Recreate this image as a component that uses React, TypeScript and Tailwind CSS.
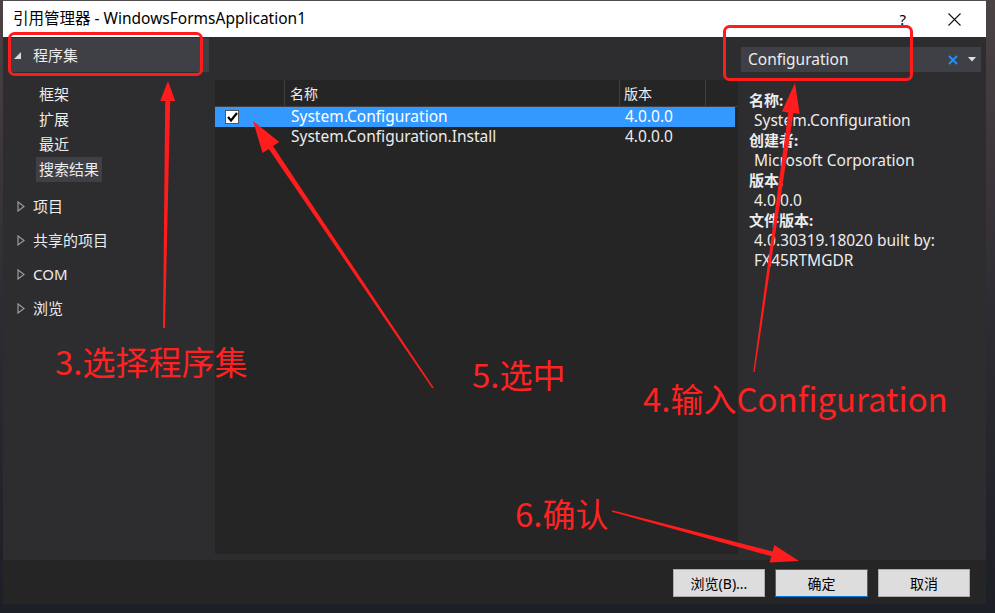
import React from 'react'

// reference manager dialog with red tutorial annotations on top

const sub = ['框架', '扩展', '最近', '搜索结果']
const groups = ['项目', '共享的项目', 'COM', '浏览']

const details = [
  { label: '名称:', value: 'System.Configuration' },
  { label: '创建者:', value: 'Microsoft Corporation' },
  { label: '版本:', value: '4.0.0.0' },
  { label: '文件版本:', value: '4.0.30319.18020 built by:\nFX45RTMGDR' },
]

// tapered arrow: thin tail, wider shaft near the head, triangular head
const arrow = (tx: number, ty: number, hx: number, hy: number, w0: number, w1: number, head: number, len: number) => {
  const dx = hx - tx
  const dy = hy - ty
  const l = Math.hypot(dx, dy)
  const ux = dx / l
  const uy = dy / l
  const nx = -uy
  const ny = ux
  const bx = hx - ux * len
  const by = hy - uy * len
  const p = (x: number, y: number) => `${x.toFixed(1)},${y.toFixed(1)}`
  return [
    p(tx + (nx * w0) / 2, ty + (ny * w0) / 2),
    p(bx + (nx * w1) / 2, by + (ny * w1) / 2),
    p(bx + (nx * head) / 2, by + (ny * head) / 2),
    p(hx, hy),
    p(bx - (nx * head) / 2, by - (ny * head) / 2),
    p(bx - (nx * w1) / 2, by - (ny * w1) / 2),
    p(tx - (nx * w0) / 2, ty - (ny * w0) / 2),
  ].join(' ')
}

const CollapsedTri = () => (
  <svg width="8" height="11" viewBox="0 0 8 11" className="shrink-0">
    <path d="M1 1 L7 5.5 L1 10 Z" fill="none" stroke="#9a9a9a" strokeWidth="1.2" />
  </svg>
)

export default function App() {
  return (
    <div className="relative w-[995px] h-[613px] overflow-hidden bg-gradient-to-b from-[#4b4244] via-[#2e2c33] to-[#1d1f26] font-['Segoe_UI','Noto_Sans','Noto_Sans_CJK_SC',sans-serif]">
      <div className="ml-[3px] w-[983px] h-[604px] flex flex-col">
        {/* title bar */}
        <div className="h-[37px] shrink-0 bg-white border-t border-[#505050] flex items-center pl-[10px] text-[15.5px] text-black">
          <span>引用管理器 - WindowsFormsApplication1</span>
          <span className="ml-auto mr-[42px] text-[15px]">?</span>
          <svg width="13" height="13" viewBox="0 0 13 13" className="mr-[25px]">
            <path d="M0.5 0.5 L12.5 12.5 M12.5 0.5 L0.5 12.5" stroke="#111" strokeWidth="1.1" />
          </svg>
        </div>

        <div className="flex-1 flex flex-col bg-[#2d2d30] text-[15px] text-[#ececec]">
          <div className="h-[517px] flex">
            {/* left nav */}
            <div className="w-[212px] bg-[#2d2d30]">
              <div className="mt-[1px] ml-[5px] mr-[6px] h-[34px] bg-[#3f3f46] flex items-center pl-[6px]">
                <svg width="7" height="7" viewBox="0 0 7 7">
                  <path d="M7 0 L7 7 L0 7 Z" fill="#d8d8d8" />
                </svg>
                <span className="ml-[12px]">程序集</span>
              </div>
              <div className="mt-[10px] pl-[33px]">
                {sub.map((s, i) => (
                  <div key={s} className="h-[25px] flex items-center">
                    <span className={`px-[3px] h-[25px] flex items-center ${i === 3 ? 'bg-[#3f3f46]' : ''}`}>{s}</span>
                  </div>
                ))}
              </div>
              <div className="mt-[7px]">
                {groups.map((g) => (
                  <div key={g} className="h-[34px] flex items-center pl-[14px]">
                    <CollapsedTri />
                    <span className="ml-[8px]">{g}</span>
                  </div>
                ))}
              </div>
            </div>

            {/* list */}
            <div className="w-[523px] flex flex-col">
              <div className="h-[43px] bg-[#2d2d30]" />
              <div className="flex-1 bg-[#252526]">
                <div className="h-[27px] flex border-b border-[#3f3f46] text-[14px]">
                  <div className="w-[70px] border-r border-[#3f3f46]" />
                  <div className="w-[335px] border-r border-[#3f3f46] pl-[5px] flex items-center">名称</div>
                  <div className="w-[86px] border-r border-[#3f3f46] pl-[4px] flex items-center">版本</div>
                </div>
                <div className="h-[20px] flex items-center bg-[#3399ff] text-white text-[15.5px] mr-[3px]">
                  <div className="w-[70px] pl-[10px] flex items-center">
                    <div className="w-[14px] h-[14px] bg-white border border-[#555] flex items-center justify-center">
                      <svg width="11" height="10" viewBox="0 0 11 10">
                        <path d="M1 5 L4 8.5 L10 1" fill="none" stroke="#000" strokeWidth="2.2" />
                      </svg>
                    </div>
                  </div>
                  <div className="w-[335px] pl-[6px]">System.Configuration</div>
                  <div className="pl-[5px]">4.0.0.0</div>
                </div>
                <div className="h-[20px] flex items-center text-[15.5px]">
                  <div className="w-[70px]" />
                  <div className="w-[335px] pl-[6px]">System.Configuration.Install</div>
                  <div className="pl-[5px]">4.0.0.0</div>
                </div>
              </div>
            </div>

            {/* right details */}
            <div className="flex-1 bg-[#2d2d30]">
              <div className="mt-[10px] ml-[3px] mr-[5px] h-[25px] bg-[#3f3f46] flex items-center pl-[7px] text-[15.5px]">
                <span>Configuration</span>
                <svg width="10" height="10" viewBox="0 0 10 10" className="ml-auto">
                  <path d="M1 1 L9 9 M9 1 L1 9" stroke="#1e8fff" strokeWidth="2" />
                </svg>
                <svg width="8" height="5" viewBox="0 0 8 5" className="ml-[10px] mr-[5px]">
                  <path d="M0 0 L8 0 L4 4.5 Z" fill="#e0e0e0" />
                </svg>
              </div>
              <div className="mt-[18px] pl-[11px] leading-[20px]">
                {details.map((d) => (
                  <div key={d.label}>
                    <div className="font-bold">{d.label}</div>
                    {d.value.split('\n').map((v) => (
                      <div key={v} className="pl-[5px] text-[15.5px]">{v}</div>
                    ))}
                  </div>
                ))}
              </div>
            </div>
          </div>

          <div className="h-[6px] bg-[#2d2d30]" />
          <div className="flex-1 bg-[#252526] flex justify-end items-start pt-[9px] pr-[16px] gap-[10px] text-[14px] text-black">
            <button className="w-[92px] h-[28px] bg-[#dddddd] border border-[#adadad]">浏览(B)...</button>
            <button className="w-[93px] h-[28px] bg-[#dddddd] border border-[#0078d7]">确定</button>
            <button className="w-[92px] h-[28px] bg-[#dddddd] border border-[#adadad]">取消</button>
          </div>
        </div>
      </div>

      {/* annotations */}
      <svg className="absolute inset-0 pointer-events-none" width="995" height="613">
        <rect x="9.5" y="33.5" width="192" height="41" rx="5" fill="none" stroke="#ff1c1c" strokeWidth="3" />
        <rect x="724.5" y="26.5" width="187" height="53" rx="5" fill="none" stroke="#ff1c1c" strokeWidth="3" />
        <polygon points={arrow(164, 328, 168, 81, 2, 5, 15, 20)} fill="#ff1c1c" />
        <polygon points={arrow(433, 388, 253, 121, 1.5, 5, 20, 32)} fill="#ff1c1c" />
        <polygon points={arrow(754, 372, 795, 83, 1.5, 5, 18, 30)} fill="#ff1c1c" />
        <polygon points={arrow(612, 511, 799, 561, 1.5, 5, 18, 28)} fill="#ff1c1c" />
      </svg>
      <div className="absolute left-[55px] top-[345px] text-[33px] leading-none text-[#ff2222] font-['Noto_Sans_CJK_SC',sans-serif]">3.选择程序集</div>
      <div className="absolute left-[472px] top-[358px] text-[33px] leading-none text-[#ff2222] font-['Noto_Sans_CJK_SC',sans-serif]">5.选中</div>
      <div className="absolute left-[643px] top-[382px] text-[33px] leading-none text-[#ff2222] font-['Noto_Sans_CJK_SC',sans-serif]">4.输入Configuration</div>
      <div className="absolute left-[515px] top-[497px] text-[33px] leading-none text-[#ff2222] font-['Noto_Sans_CJK_SC',sans-serif]">6.确认</div>
    </div>
  )
}
